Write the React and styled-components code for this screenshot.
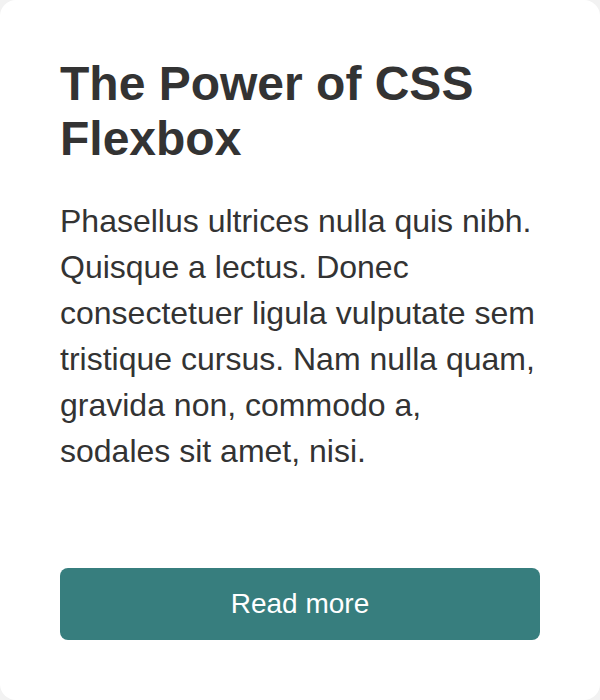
import React from "react";
import styled, { createGlobalStyle } from "styled-components";

const GlobalStyle = createGlobalStyle`
  html, body {
    margin: 0;
    padding: 0;
    background: #f2f2f2;
  }
  body {
    font-family: "Liberation Sans", Arial, Helvetica, sans-serif;
  }
`;

const Card = styled.article`
  box-sizing: border-box;
  width: 600px;
  height: 700px;
  display: flex;
  flex-direction: column;
  padding: 56px 60px 60px;
  background: #ffffff;
  border-radius: 16px;
  color: #333333;
`;

const Title = styled.h1`
  margin: 0 0 32px;
  font-size: 48px;
  line-height: 55px;
  font-weight: 700;
`;

const Body = styled.p`
  margin: 0;
  font-size: 32px;
  line-height: 46px;
`;

const Button = styled.a`
  margin-top: auto;
  display: flex;
  align-items: center;
  justify-content: center;
  height: 72px;
  border-radius: 8px;
  background: #377e7e;
  color: #ffffff;
  font-size: 28px;
  text-decoration: none;
`;

export default function App() {
  return (
    <>
      <GlobalStyle />
      <Card>
        <Title>The Power of CSS Flexbox</Title>
        <Body>
          Phasellus ultrices nulla quis nibh. Quisque a lectus. Donec
          consectetuer ligula vulputate sem tristique cursus. Nam nulla quam,
          gravida non, commodo a, sodales sit amet, nisi.
        </Body>
        <Button href="#">Read more</Button>
      </Card>
    </>
  );
}
